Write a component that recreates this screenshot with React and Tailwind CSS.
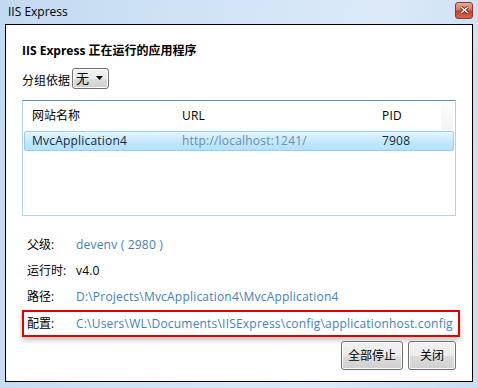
import React from "react";

const font = "font-['Open_Sans','Noto_Sans_CJK_SC',sans-serif]";

const Win7Button = ({ children, className = "" }) => (
  <button
    className={`rounded-[3px] border border-[#707070] bg-[linear-gradient(#f2f2f2_0%,#ebebeb_50%,#dddddd_51%,#cfcfcf_100%)] shadow-[inset_0_0_0_1px_#fcfcfc] text-[12px] text-black ${className}`}
  >
    {children}
  </button>
);

const InfoRow = ({ label, value, link = true }) => (
  <div className="flex h-[26px] items-center pl-[5px]">
    <span className="w-[49px] shrink-0">{label}</span>
    <span className={`tracking-[0.2px] ${link ? "text-[#3f81c2]" : "text-black"}`}>{value}</span>
  </div>
);

export default function App() {
  return (
    <div
      className={`${font} flex h-[388px] w-[478px] flex-col bg-[linear-gradient(100deg,#c3d9f1_0%,#d3e5f7_45%,#dbe9f8_70%,#c9def4_100%)] px-[5px] pb-[6px] text-[12px] text-black`}
    >
      {/* title bar */}
      <div className="flex h-[24px] items-center justify-between pl-[3px]">
        <span className="text-[12px] leading-none">IIS Express</span>
        <button className="mt-[-4px] flex h-[17px] w-[18px] items-center justify-center rounded-[3px] border border-[#8a3a2c] bg-[linear-gradient(#eaa898_0%,#d9755e_45%,#c7422a_55%,#d8644a_100%)]">
          <svg width="9" height="8" viewBox="0 0 9 8">
            <path d="M1 1 L8 7 M8 1 L1 7" stroke="#5a1e14" strokeWidth="3" />
            <path d="M1 1 L8 7 M8 1 L1 7" stroke="#ffffff" strokeWidth="1.6" />
          </svg>
        </button>
      </div>

      {/* client area */}
      <div className="flex flex-1 flex-col border border-black bg-white px-[16px]">
        <div className="mt-[18px] h-[16px] font-bold leading-[16px]">
          IIS Express 正在运行的应用程序
        </div>

        <div className="mt-[9px] flex items-end">
          <span className="leading-[16px]">分组依据</span>
          <div className="relative ml-[2px] flex h-[21px] w-[37px] items-center rounded-[3px] border border-[#707070] bg-[linear-gradient(#f2f2f2_0%,#ebebeb_50%,#dddddd_51%,#cfcfcf_100%)] pl-[3px] shadow-[inset_0_0_0_1px_#fcfcfc]">
            <span className="text-[13px] leading-none">无</span>
            <svg className="absolute right-[5px] top-[7px]" width="7" height="4" viewBox="0 0 7 4">
              <path d="M0 0 H7 L3.5 4 Z" fill="#000" />
            </svg>
          </div>
        </div>

        {/* list */}
        <div className="mt-[11px] flex h-[116px] w-[434px] flex-col border border-[#b5cfe7] border-t-[#5a8fc4]">
          <div className="relative flex h-[30px] items-center pl-[9px]">
            <span className="w-[150px]">网站名称</span>
            <span className="w-[200px] tracking-[0.2px]">URL</span>
            <span className="tracking-[0.2px]">PID</span>
            <div className="absolute right-[2px] top-0 h-[29px] w-[12px] bg-[linear-gradient(#ffffff,#f3f3f3)]" />
          </div>
          <div className="mx-[1px] flex h-[20px] items-center rounded-[2px] border border-[#8fd0f3] bg-[linear-gradient(#e6f6fe,#c2e8fc_55%,#b4e1fa)] pl-[7px] tracking-[0.2px]">
            <span className="w-[150px] text-[#102a44]">MvcApplication4</span>
            <span className="w-[200px] text-[#6b8cac]">http://localhost:1241/</span>
            <span className="text-[#102a44]">7908</span>
          </div>
        </div>

        {/* details */}
        <div className="mt-[16px] flex flex-col">
          <InfoRow label="父级:" value="devenv ( 2980 )" />
          <InfoRow label="运行时:" value="v4.0" link={false} />
          <InfoRow label="路径:" value="D:\Projects\MvcApplication4\MvcApplication4" />
          <div className="flex h-[27px] w-[438px] items-center border-2 border-[#e00000] pl-[3px] shadow-[0_3px_5px_rgba(0,0,0,0.25)]">
            <span className="w-[49px] shrink-0">配置:</span>
            <span className="whitespace-nowrap tracking-[0.2px] text-[#3f81c2]">
              C:\Users\WL\Documents\IISExpress\config\applicationhost.config
            </span>
          </div>
        </div>

        <div className="mt-[4px] flex justify-end gap-[5px]">
          <Win7Button className="h-[29px] w-[62px]">全部停止</Win7Button>
          <Win7Button className="h-[29px] w-[48px]">关闭</Win7Button>
        </div>
      </div>
    </div>
  );
}
